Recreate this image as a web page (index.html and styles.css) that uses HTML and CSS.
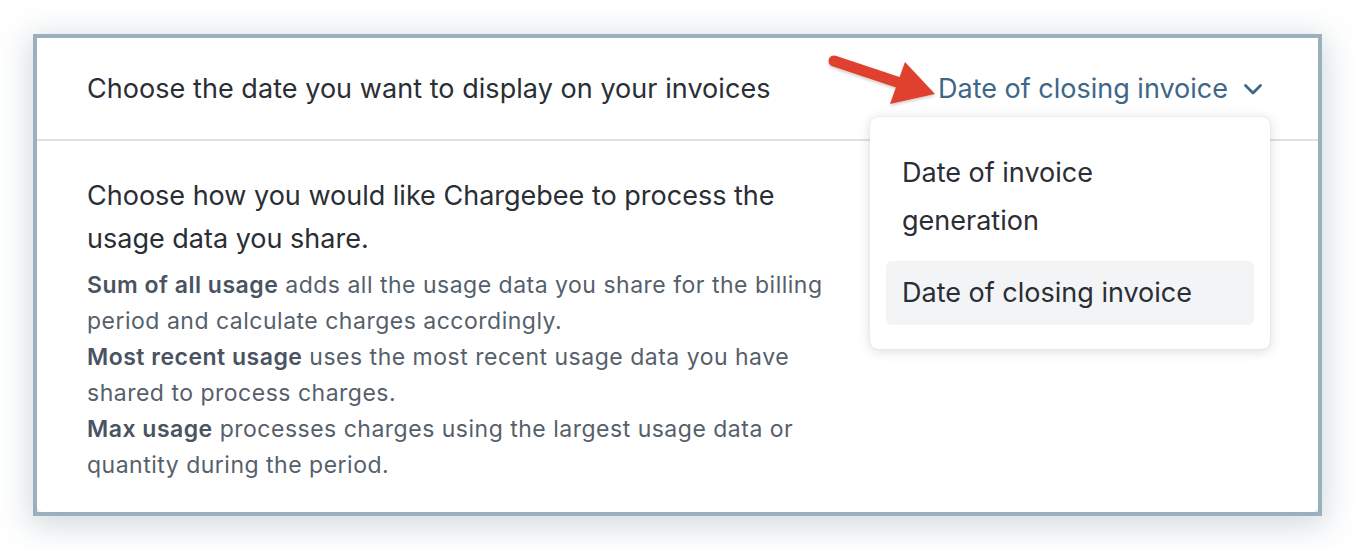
FILE: index.html
```html
<!DOCTYPE html>
<html>
<head>
<meta charset="utf-8">
<link rel="stylesheet" href="styles.css">
</head>
<body>
<div class="page">
  <div class="frame">
    <div class="card">
      <div class="header">
        <div class="title">Choose the date you want to display on your invoices</div>
        <div class="select">
          <span>Date of closing invoice</span>
          <svg class="chev" width="20" height="14" viewBox="0 0 20 14"><path d="M2.5 3.5 L10 11 L17.5 3.5" fill="none" stroke="#3d6788" stroke-width="2.8" stroke-linecap="round" stroke-linejoin="round"/></svg>
        </div>
      </div>
      <div class="content">
        <div class="lead">Choose how you would like Chargebee to process the usage data you share.</div>
        <div class="desc">
          <p><b>Sum of all usage</b> adds all the usage data you share for the billing period and calculate charges accordingly.</p>
          <p><b>Most recent usage</b> uses the most recent usage data you have shared to process charges.</p>
          <p><b>Max usage</b> processes charges using the largest usage data or quantity during the period.</p>
        </div>
      </div>
      <div class="menu">
        <div class="item first">Date of invoice generation</div>
        <div class="item active">Date of closing invoice</div>
      </div>
    </div>
    <svg class="arrow" width="120" height="60" viewBox="0 0 120 60">
      <defs>
        <filter id="sh" x="-20%" y="-20%" width="140%" height="160%">
          <feDropShadow dx="0" dy="2" stdDeviation="1.5" flood-color="#000" flood-opacity="0.18"/>
        </filter>
      </defs>
      <g filter="url(#sh)">
        <line x1="10" y1="13" x2="76" y2="35" stroke="#e0412f" stroke-width="11" stroke-linecap="round"/>
        <polygon points="81,14 111,46 66,56" fill="#e0412f"/>
      </g>
    </svg>
  </div>
</div>
</body>
</html>
```

FILE: styles.css
```css
html, body {
  margin: 0;
  padding: 0;
  background: #ffffff;
}
body {
  font-family: Inter, "Noto Sans", "Liberation Sans", sans-serif;
  width: 1356px;
  height: 550px;
  overflow: hidden;
}
.page {
  padding: 34px 0 0 33px;
}
.frame {
  position: relative;
  width: 1281px;
  height: 474px;
  border: 4px solid #9bb0bd;
  box-shadow: 0 6px 30px 4px rgba(100, 125, 145, 0.28);
  background: #e9ecef;
}
.card {
  position: relative;
  height: 100%;
  background: #ffffff;
  border-radius: 0 0 6px 6px;
}
.header {
  height: 103px;
  border-bottom: 2px solid #e1e1e1;
  display: flex;
  align-items: center;
  justify-content: space-between;
  padding: 0 55px 0 50px;
  box-sizing: border-box;
}
.title {
  font-size: 27px;
  letter-spacing: 0.05px;
  color: #2a2e35;
}
.select {
  display: flex;
  align-items: center;
  gap: 15px;
  font-size: 27px;
  color: #3d6788;
}
.chev {
  display: block;
  margin-top: 1px;
}
.content {
  padding: 33px 50px 0 50px;
  width: 752px;
}
.lead {
  font-size: 27px;
  line-height: 43px;
  color: #2a2e35;
}
.desc {
  margin-top: 7px;
  font-size: 23px;
  letter-spacing: 0.5px;
  line-height: 36px;
  color: #565f6c;
}
.desc p {
  margin: 0;
}
.desc b {
  font-weight: 600;
  color: #4a5361;
}
.menu {
  position: absolute;
  left: 833px;
  top: 79px;
  width: 400px;
  box-sizing: border-box;
  padding: 16px 16px 24px 16px;
  background: #ffffff;
  border-radius: 8px;
  box-shadow: 0 2px 12px rgba(40, 50, 70, 0.18), 0 0 1px rgba(40, 50, 70, 0.2);
}
.item {
  font-size: 27px;
  line-height: 48px;
  color: #2a2e35;
  padding: 8px 16px;
  border-radius: 6px;
}
.item.first {
  padding: 16px 100px 16px 16px;
}
.item.active {
  background: #f3f4f6;
}
.arrow {
  position: absolute;
  left: 787px;
  top: 10px;
  overflow: visible;
}
```
